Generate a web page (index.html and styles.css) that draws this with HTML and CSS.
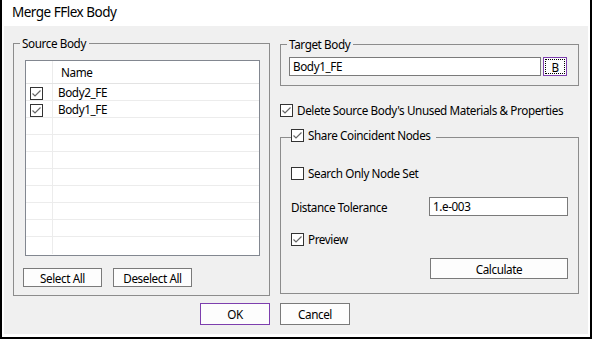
FILE: index.html
```html
<!DOCTYPE html>
<html lang="en">
<head>
    <meta charset="UTF-8">
    <title>Merge FFlex Body</title>
    <link rel="stylesheet" href="styles.css">
</head>
<body>
    <div class="window">
        <div class="titlebar">Merge FFlex Body</div>
        <div class="client">
            <div class="panes">
                <fieldset class="group source">
                    <legend>Source Body</legend>
                    <div class="group-body">
                        <div class="grid">
                            <div class="grid-row head">
                                <div class="cell chk"></div>
                                <div class="cell name">Name</div>
                            </div>
                            <div class="grid-row">
                                <div class="cell chk"><span class="box checked"></span></div>
                                <div class="cell name">Body2_FE</div>
                            </div>
                            <div class="grid-row">
                                <div class="cell chk"><span class="box checked"></span></div>
                                <div class="cell name">Body1_FE</div>
                            </div>
                            <div class="grid-row"><div class="cell chk"></div><div class="cell name"></div></div>
                            <div class="grid-row"><div class="cell chk"></div><div class="cell name"></div></div>
                            <div class="grid-row"><div class="cell chk"></div><div class="cell name"></div></div>
                            <div class="grid-row"><div class="cell chk"></div><div class="cell name"></div></div>
                            <div class="grid-row"><div class="cell chk"></div><div class="cell name"></div></div>
                            <div class="grid-row"><div class="cell chk"></div><div class="cell name"></div></div>
                            <div class="grid-row"><div class="cell chk"></div><div class="cell name"></div></div>
                            <div class="grid-row last"><div class="cell chk"></div><div class="cell name"></div></div>
                        </div>
                        <div class="button-row">
                            <button class="btn small">Select All</button>
                            <button class="btn small">Deselect All</button>
                        </div>
                    </div>
                </fieldset>

                <div class="right">
                    <fieldset class="group target">
                        <legend>Target Body</legend>
                        <div class="target-body">
                            <div class="textbox wide">Body1_FE</div>
                            <button class="btn browse"><span class="focus">B</span></button>
                        </div>
                    </fieldset>

                    <div class="check delete">
                        <span class="box checked"></span>
                        <span>Delete Source Body's Unused Materials &amp; Properties</span>
                    </div>

                    <fieldset class="group share">
                        <legend>
                            <span class="check">
                                <span class="box checked"></span>
                                <span>Share Coincident Nodes</span>
                            </span>
                        </legend>
                        <div class="share-body">
                            <div class="check">
                                <span class="box"></span>
                                <span>Search Only Node Set</span>
                            </div>
                            <div class="field">
                                <span class="field-label">Distance Tolerance</span>
                                <div class="textbox tol">1.e-003</div>
                            </div>
                            <div class="check">
                                <span class="box checked"></span>
                                <span>Preview</span>
                            </div>
                            <div class="calc-row">
                                <button class="btn calc">Calculate</button>
                            </div>
                        </div>
                    </fieldset>
                </div>
            </div>

            <div class="footer">
                <button class="btn dialog default">OK</button>
                <button class="btn dialog">Cancel</button>
            </div>
        </div>
    </div>
</body>
</html>
```

FILE: styles.css
```css
* {
    box-sizing: border-box;
}
body {
    margin: 0;
    font-family: 'Noto Sans', 'DejaVu Sans', sans-serif;
    font-size: 11.7px;
    letter-spacing: -0.4px;
    color: #000;
    background-color: #fff;
}
.window {
    width: 592px;
    height: 339px;
    background-color: #fff;
    border: 2px solid #000;
    border-top: none;
    padding: 0 2px 3px 2px;
    display: flex;
    flex-direction: column;
}
.titlebar {
    height: 26px;
    line-height: 25px;
    padding-left: 8px;
    font-size: 13.5px;
    letter-spacing: -0.5px;
    color: #000;
}
.client {
    flex: 1;
    background-color: #f0f0f0;
    padding: 10px 0 0 9px;
}
.panes {
    display: flex;
    gap: 10px;
}
.group {
    margin: 0;
    padding: 0;
    border: 1px solid #8c8c8c;
    min-width: 0;
}
.group legend {
    margin-left: 6px;
    padding: 0 3px 0 2px;
    line-height: 14px;
    height: 14px;
    white-space: nowrap;
}

/* source list */
.source {
    width: 257px;
}
.group-body {
    padding: 10px 9px 8px 11px;
}
.grid {
    width: 235px;
    height: 196px;
    border: 1px solid #828790;
    background-color: #fff;
    overflow: hidden;
}
.grid-row {
    display: flex;
    height: 17px;
    border-bottom: 1px solid #ececec;
}
.grid-row.head {
    height: 23px;
    border-bottom: 1px solid #e3e3e3;
}
.grid-row.last {
    border-bottom: none;
}
.cell.chk {
    width: 27px;
    border-right: 1px solid #ececec;
    padding: 3px 0 0 4px;
}
.cell.name {
    flex: 1;
    padding-left: 5px;
    line-height: 16px;
}
.head .cell.name {
    padding-left: 8px;
    line-height: 22px;
}
.button-row {
    display: flex;
    gap: 11px;
    margin: 12px 0 0 -2px;
}

/* buttons */
.btn {
    font-family: inherit;
    font-size: 11.7px;
    letter-spacing: -0.4px;
    color: #000;
    background-color: #fdfdfd;
    border: 1px solid #7a7a7a;
    border-radius: 0;
    padding: 0;
    margin: 0;
}
.btn.small {
    width: 79px;
    height: 19px;
    line-height: 16px;
}
.btn.browse {
    width: 24px;
    height: 19px;
    border-color: #7d3fae;
    padding: 1px;
    display: flex;
}
.btn.browse .focus {
    flex: 1;
    border: 1px dotted #000;
    line-height: 14px;
    text-align: center;
}
.btn.calc {
    width: 138px;
    height: 21px;
}
.btn.dialog {
    width: 70px;
    height: 22px;
}
.btn.default {
    border-color: #7d3fae;
}

/* right column */
.right {
    width: 299px;
    margin-top: 1px;
    display: flex;
    flex-direction: column;
}
.target-body {
    display: flex;
    gap: 2px;
    padding: 6px 0 9px 8px;
}
.textbox {
    height: 19px;
    border: 1px solid #7a7a7a;
    background-color: #fff;
    line-height: 17px;
    padding-left: 3px;
}
.textbox.wide {
    width: 252px;
}
.textbox.tol {
    width: 139px;
}
.check {
    display: flex;
    align-items: center;
    gap: 4px;
    height: 13px;
    line-height: 13px;
    white-space: nowrap;
}
.box {
    width: 13px;
    height: 13px;
    flex: none;
    display: inline-block;
    border: 1px solid #333;
    background-color: #fff;
}
.box.checked {
    background: #fff url("data:image/svg+xml;utf8,<svg xmlns='http://www.w3.org/2000/svg' width='11' height='11'><path d='M1.5 5.5 L4 8 L9.5 2.5' fill='none' stroke='%23666' stroke-width='1.2'/></svg>") no-repeat center;
}
.delete {
    margin-top: 18px;
}
.share {
    margin-top: 12px;
}
.share legend {
    margin-left: 10px;
    padding: 0 5px 0 0;
    height: 16px;
    line-height: 16px;
}
.share legend .check {
    height: 16px;
    align-items: flex-start;
}
.share-body {
    display: flex;
    flex-direction: column;
    padding: 22px 10px 14px 10px;
}
.field {
    display: flex;
    align-items: center;
    justify-content: space-between;
    margin-top: 17px;
    height: 19px;
}
.share-body .field + .check {
    margin-top: 17px;
}
.calc-row {
    display: flex;
    justify-content: flex-end;
    margin-top: 12px;
}

.footer {
    display: flex;
    gap: 10px;
    padding: 7px 0 0 187px;
}
```
